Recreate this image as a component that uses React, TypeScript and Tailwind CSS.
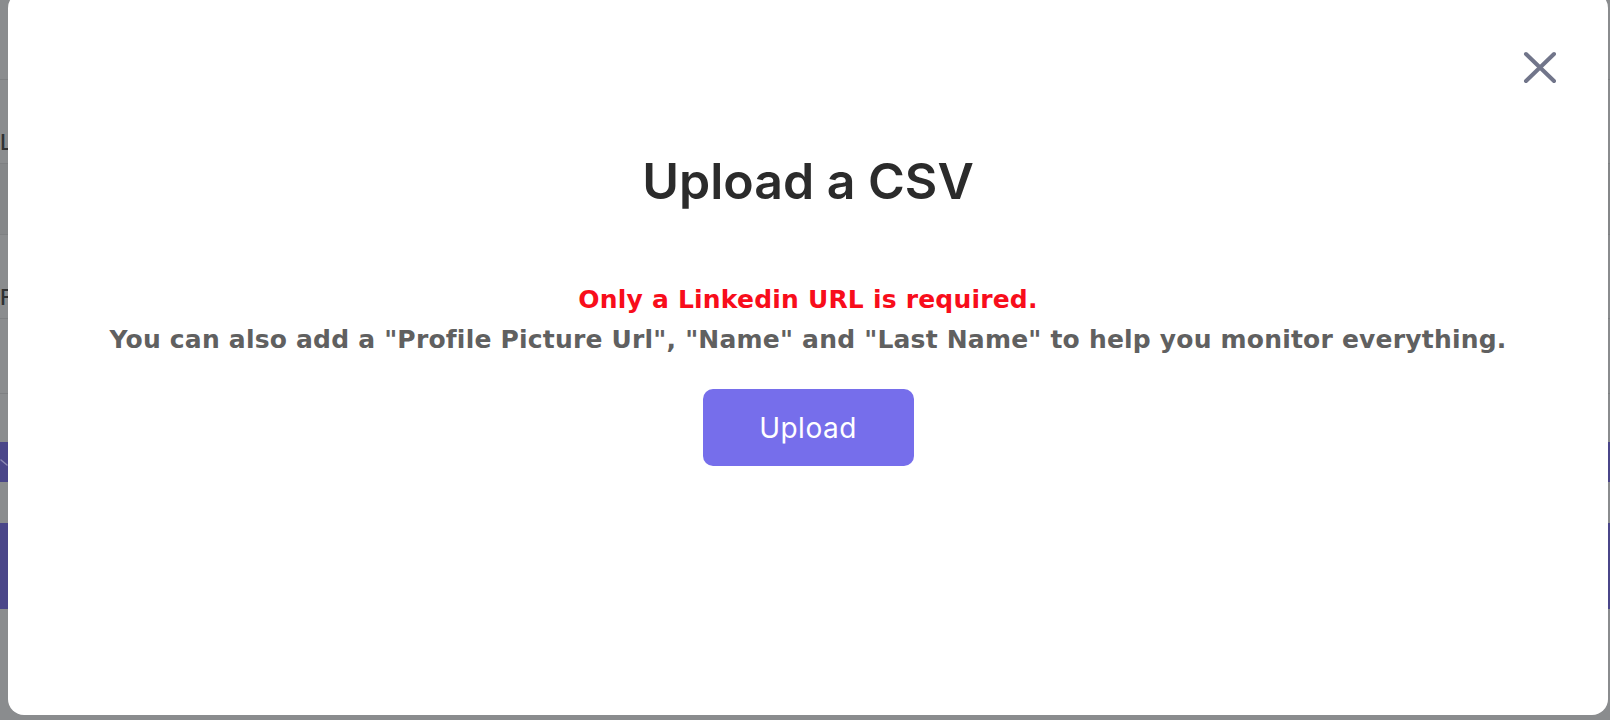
import React from "react";

export default function App() {
  return (
    <div className="relative h-[720px] w-[1610px] overflow-hidden bg-[#8a8c8e] font-['Inter',sans-serif]">
      {/* dimmed page behind the modal */}
      <div className="flex flex-col text-[#2f3133]">
        <div className="h-[79px]" />
        <div className="h-[1px] bg-[#7e8082]" />
        <div className="h-[83px] flex items-end pb-[10px] text-[22px] font-medium leading-none">L</div>
        <div className="h-[1px] bg-[#7e8082]" />
        <div className="h-[70px] bg-[#858789]" />
        <div className="h-[1px] bg-[#7e8082]" />
        <div className="h-[83px] flex items-end pb-[10px] text-[22px] font-medium leading-none">F</div>
        <div className="h-[1px] bg-[#7e8082]" />
        <div className="h-[74px]" />
        <div className="h-[1px] bg-[#7e8082]" />
        <div className="h-[48px]" />
        <div className="h-[40px] bg-[#4a4689] flex items-center">
          <svg width="8" height="8" viewBox="0 0 8 8">
            <path d="M1 2l6 5" stroke="#8c89b3" strokeWidth="1.5" strokeLinecap="round" />
          </svg>
        </div>
        <div className="h-[41px]" />
        <div className="h-[86px] bg-[#4a4689]" />
        <div className="h-[74px]" />
        <div className="flex-1 h-[40px] bg-[#7f8183]" />
      </div>

      {/* modal */}
      <div className="absolute left-[8px] top-[-8px] h-[723px] w-[1600px] rounded-2xl bg-white">
        <button className="absolute right-[51px] top-[59px] text-[#71758a]">
          <svg width="34" height="33" viewBox="0 0 34 33" fill="none">
            <path d="M3 3l28 27M31 3L3 30" stroke="currentColor" strokeWidth="4" strokeLinecap="round" />
          </svg>
        </button>

        <div className="flex flex-col items-center pt-[164px]">
          <h1 className="text-[50px] font-semibold leading-none text-[#2b2b2b]">Upload a CSV</h1>

          <div className="mt-[74px] flex flex-col items-center font-['DejaVu_Sans',sans-serif] text-[25px] font-bold leading-[40px] tracking-[0.2px]">
            <p className="text-[#f80d1b]">Only a Linkedin URL is required.</p>
            <p className="text-[#606060]">
              You can also add a "Profile Picture Url", "Name" and "Last Name" to help you monitor everything.
            </p>
          </div>

          <button className="mt-[29px] h-[77px] w-[211px] rounded-[10px] bg-[#766eeb] text-[28px] tracking-[0.5px] text-white">
            Upload
          </button>
        </div>
      </div>
    </div>
  );
}
